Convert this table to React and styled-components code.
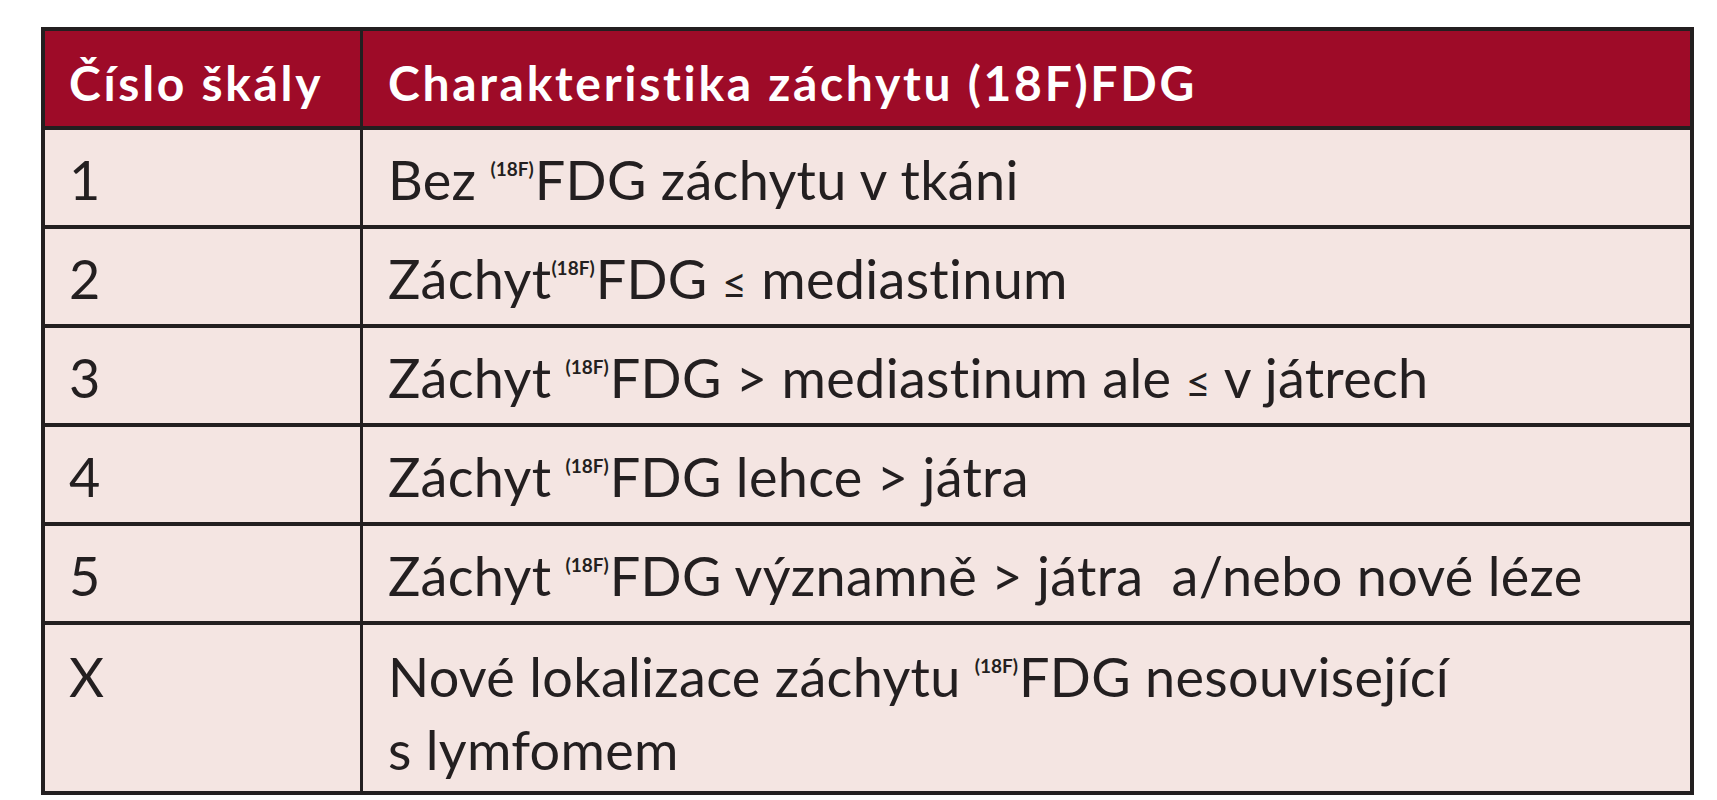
import React from "react";
import styled, { createGlobalStyle } from "styled-components";

const Global = createGlobalStyle`
  html, body { margin: 0; padding: 0; background: #ffffff; }
  body { font-family: Lato, "Open Sans", "Liberation Sans", sans-serif; }
`;

const Page = styled.div`
  padding: 27px 0 0 41px;
`;

const Table = styled.table`
  box-sizing: border-box;
  width: 1653px;
  border-collapse: separate;
  border-spacing: 0;
  table-layout: fixed;
  border: 4px solid #231f20;
  background: #f4e5e2;
`;

const HeadCell = styled.th`
  box-sizing: border-box;
  height: 99px;
  padding: 23px 0 0 ${(p) => (p.$first ? 24 : 25)}px;
  background: #9e0b28;
  color: #ffffff;
  font-family: Lato, "Open Sans", "Liberation Sans", sans-serif;
  font-weight: 700;
  font-size: 48px;
  letter-spacing: 2.7px;
  line-height: 1.2;
  text-align: left;
  vertical-align: top;
  white-space: nowrap;
  border-bottom: 4px solid #231f20;
  border-right: ${(p) => (p.$first ? "3px solid #231f20" : "none")};
  width: ${(p) => (p.$first ? "318px" : "auto")};
`;

const Cell = styled.td`
  box-sizing: border-box;
  height: ${(p) => (p.$last ? 166 : 99)}px;
  padding: ${(p) => (p.$last ? 15 : 13)}px 0 0 ${(p) => (p.$first ? 24 : 25)}px;
  color: #231f20;
  font-family: Lato, "Open Sans", "Liberation Sans", sans-serif;
  font-weight: 400;
  font-size: 54px;
  letter-spacing: 0.3px;
  line-height: 73px;
  text-align: left;
  vertical-align: top;
  border-bottom: ${(p) => (p.$last ? "none" : "4px solid #231f20")};
  border-right: ${(p) => (p.$first ? "3px solid #231f20" : "none")};
`;

const Sup = styled.span`
  font-size: 19px;
  font-weight: 700;
  letter-spacing: 0;
  line-height: 0;
  vertical-align: 24px;
  margin-right: 1px;
`;

const Le = styled.span`
  font-size: 0.8em;
`;

const F18 = () => <Sup>(18F)</Sup>;

const rows = [
  { n: "1", text: <>Bez <F18 />FDG záchytu v tkáni</> },
  { n: "2", text: <>Záchyt<F18 />FDG <Le>≤</Le> mediastinum</> },
  { n: "3", text: <>Záchyt <F18 />FDG &gt; mediastinum ale <Le>≤</Le> v játrech</> },
  { n: "4", text: <>Záchyt <F18 />FDG lehce &gt; játra</> },
  { n: "5", text: <>Záchyt <F18 />FDG významně &gt; játra&nbsp; a/nebo nové léze</> },
  {
    n: "X",
    text: (
      <>
        Nové lokalizace záchytu <F18 />FDG nesouvisející
        <br />s lymfomem
      </>
    ),
  },
];

export default function App() {
  return (
    <>
      <Global />
      <Page>
        <Table>
          <thead>
            <tr>
              <HeadCell $first>Číslo škály</HeadCell>
              <HeadCell>Charakteristika záchytu (18F)FDG</HeadCell>
            </tr>
          </thead>
          <tbody>
            {rows.map((r, i) => {
              const last = i === rows.length - 1;
              return (
                <tr key={r.n}>
                  <Cell $first $last={last}>{r.n}</Cell>
                  <Cell $last={last}>{r.text}</Cell>
                </tr>
              );
            })}
          </tbody>
        </Table>
      </Page>
    </>
  );
}
